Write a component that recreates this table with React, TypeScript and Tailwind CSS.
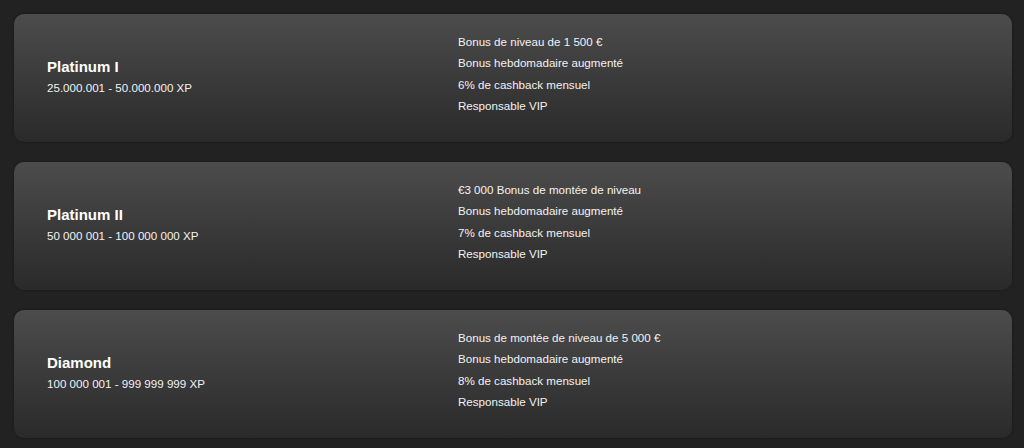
import React from 'react';

interface Tier {
  name: string;
  range: string;
  perks: string[];
}

const tiers: Tier[] = [
  {
    name: 'Platinum I',
    range: '25.000.001 - 50.000.000 XP',
    perks: [
      'Bonus de niveau de 1 500 €',
      'Bonus hebdomadaire augmenté',
      '6% de cashback mensuel',
      'Responsable VIP',
    ],
  },
  {
    name: 'Platinum II',
    range: '50 000 001 - 100 000 000 XP',
    perks: [
      '€3 000 Bonus de montée de niveau',
      'Bonus hebdomadaire augmenté',
      '7% de cashback mensuel',
      'Responsable VIP',
    ],
  },
  {
    name: 'Diamond',
    range: '100 000 001 - 999 999 999 XP',
    perks: [
      'Bonus de montée de niveau de 5 000 €',
      'Bonus hebdomadaire augmenté',
      '8% de cashback mensuel',
      'Responsable VIP',
    ],
  },
];

function TierCard({ tier }: { tier: Tier }) {
  return (
    <div className="flex h-[128px] w-[998px] rounded-[10px] bg-gradient-to-b from-[#4c4c4c] to-[#2a2a2a] shadow-[0_0_3px_rgba(0,0,0,0.35)]">
      {/* tier name + xp range */}
      <div className="flex w-[444px] flex-col justify-center pl-[33px]">
        <h3 className="text-[15px] font-bold leading-[20px] text-white">{tier.name}</h3>
        <p className="text-[11.6px] leading-[22px] text-[#f2f2f2]">{tier.range}</p>
      </div>
      {/* perks */}
      <ul className="flex flex-col pt-[17px]">
        {tier.perks.map((perk) => (
          <li key={perk} className="text-[11.6px] leading-[21.3px] text-[#f2f2f2]">
            {perk}
          </li>
        ))}
      </ul>
    </div>
  );
}

export default function App() {
  return (
    <div
      className="flex h-[448px] w-[1024px] flex-col gap-[20px] bg-[#222222] pl-[14px] pt-[14px]"
      style={{ fontFamily: '"Liberation Sans", Arial, sans-serif' }}
    >
      {tiers.map((t) => (
        <TierCard key={t.name} tier={t} />
      ))}
    </div>
  );
}
